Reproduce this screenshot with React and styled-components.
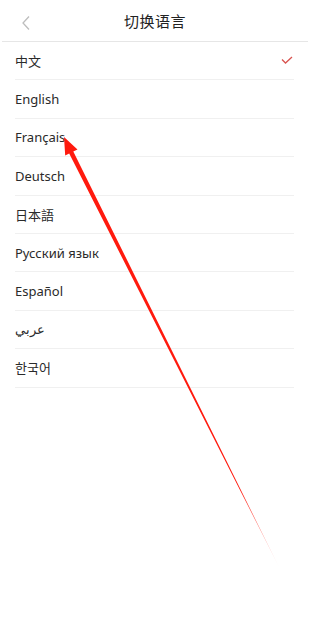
import styled, { createGlobalStyle } from "styled-components";

const Global = createGlobalStyle`
    html, body {
        margin: 0;
        padding: 0;
        background: #fff;
    }
    body {
        font-family: "Noto Sans", "Noto Sans CJK SC", sans-serif;
        color: #222;
    }
`;

const Page = styled.div`
    position: relative;
    width: 320px;
    height: 636px;
    overflow: hidden;
    background: #fff;
`;

const Header = styled.div`
    display: flex;
    align-items: center;
    justify-content: center;
    position: relative;
    height: 42px;
    margin: 0 12px 0 2px;
    border-bottom: 1px solid #e6e6e6;
    box-sizing: border-box;
`;

const Back = styled.div`
    position: absolute;
    left: 18px;
    top: 15px;
    width: 12px;
    height: 16px;
    display: flex;
`;

const Title = styled.div`
    font-size: 15px;
    color: #222;
    letter-spacing: 0.5px;
    font-family: "Noto Sans CJK SC", sans-serif;
`;

const List = styled.ul`
    list-style: none;
    margin: 0 26px 0 15px;
    padding: 0;
`;

const Row = styled.li`
    display: flex;
    align-items: center;
    justify-content: space-between;
    height: 38.4px;
    box-sizing: border-box;
    border-bottom: 1px solid #f0f0f0;
    font-size: 13px;
    color: #2a2a2a;
    padding-right: 1px;
`;

const Arrow = styled.svg`
    position: absolute;
    left: 0;
    top: 0;
    pointer-events: none;
`;

const languages = ["中文", "English", "Français", "Deutsch", "日本語", "Русский язык", "Español", "عربي", "한국어"];

const App = () => {
    return <Page>
        <Global />
        <Header>
            <Back>
                <svg width="12" height="16" viewBox="0 0 12 16">
                    <path d="M9 1.5 L3 8 L9 14.5" fill="none" stroke="#bdbdbd" strokeWidth="1.3" />
                </svg>
            </Back>
            <Title>切换语言</Title>
        </Header>
        <List>
            {languages.map((lang, i) => (
                <Row key={lang}>
                    <span>{lang}</span>
                    {i === 0 && (
                        <svg width="12" height="9" viewBox="0 0 12 9">
                            <path d="M1 3.5 L4.5 7 L11 1" fill="none" stroke="#d9534f" strokeWidth="1.3" />
                        </svg>
                    )}
                </Row>
            ))}
        </List>
        <Arrow width="320" height="636" viewBox="0 0 320 636">
            <defs>
                <linearGradient id="fade" x1="64" y1="138" x2="279" y2="567" gradientUnits="userSpaceOnUse">
                    <stop offset="0" stopColor="#ff1a0e" />
                    <stop offset="0.82" stopColor="#ff1a0e" />
                    <stop offset="1" stopColor="#ff1a0e" stopOpacity="0.05" />
                </linearGradient>
            </defs>
            <polygon points="64,137 77.5,149.5 73.3,151.4 279,567 69.2,153.4 65.2,155.5" fill="url(#fade)" />
        </Arrow>
    </Page>
}

export default App;
